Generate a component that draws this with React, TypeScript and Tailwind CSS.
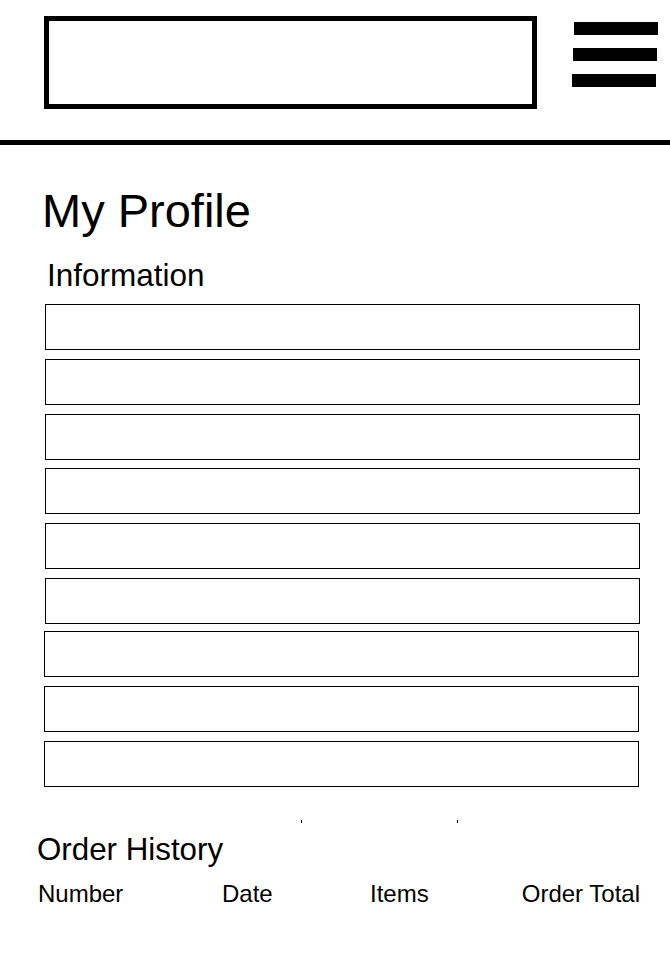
const fieldGaps = [0, 9, 9, 8, 9, 9, 7, 9, 9];

function Hamburger() {
  return (
    <div className="mt-[6px] ml-[35px] flex flex-col gap-[13px]">
      <span className="ml-[2px] block h-[13px] w-[84px] bg-black" />
      <span className="ml-[1px] block h-[13px] w-[84px] bg-black" />
      <span className="block h-[13px] w-[84px] bg-black" />
    </div>
  );
}

export default function App() {
  return (
    <div className="min-h-[954px] bg-white text-black font-['Liberation_Sans',Arial,sans-serif]">
      <header className="flex h-[145px] items-start border-b-[5px] border-black pt-[16px] pl-[44px]">
        <div className="h-[93px] w-[493px] border-[5px] border-black" />
        <Hamburger />
      </header>

      <main className="px-[42px]">
        <h1 className="mt-[42px] text-[47px] leading-[48px]">My Profile</h1>
        <h2 className="mt-[24px] ml-[5px] text-[31.5px] leading-[32px]">Information</h2>

        <div className="mt-[13px] flex flex-col">
          {fieldGaps.map((gap, i) => (
            <input
              key={i}
              type="text"
              aria-label={`Field ${i + 1}`}
              style={{ marginTop: gap }}
              className={
                i >= 6
                  ? "ml-[2px] block h-[46px] w-[595px] border border-black bg-white outline-none"
                  : "ml-[3px] block h-[46px] w-[595px] border border-black bg-white outline-none"
              }
            />
          ))}
        </div>

        <div className="mt-[33px] flex h-[3px]">
          <span className="ml-[259px] block h-[3px] w-px bg-black" />
          <span className="ml-[155px] block h-[3px] w-px bg-black" />
        </div>

        <h2 className="mt-[11px] -ml-[5px] text-[31.3px] leading-[32px]">Order History</h2>

        <div className="mt-[16px] -ml-[4px] grid w-[602px] grid-cols-[184px_148px_1fr_auto] text-[24px] leading-[24px]">
          <span>Number</span>
          <span>Date</span>
          <span>Items</span>
          <span className="text-right">Order Total</span>
        </div>
      </main>
    </div>
  );
}
